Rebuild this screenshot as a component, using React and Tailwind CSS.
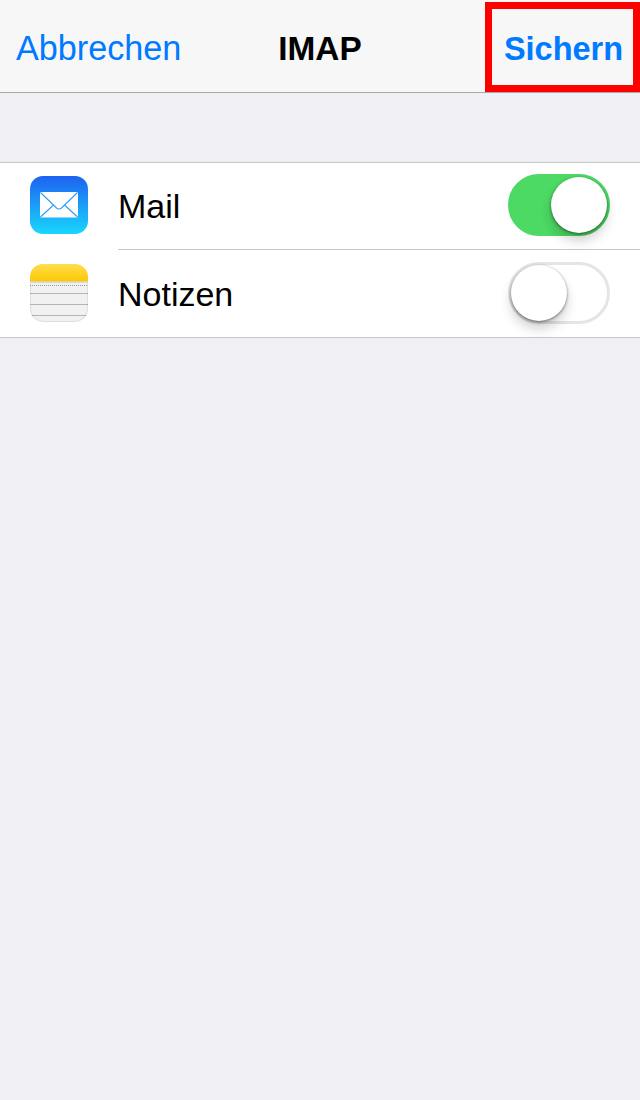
import React from 'react';

function MailIcon() {
  return (
    <svg width="58" height="58" viewBox="0 0 58 58" className="block">
      <defs>
        <linearGradient id="mailBg" x1="0" y1="0" x2="0" y2="1">
          <stop offset="0" stopColor="#1d62f0" />
          <stop offset="1" stopColor="#19d7fd" />
        </linearGradient>
      </defs>
      <rect width="58" height="58" rx="13" fill="url(#mailBg)" />
      <rect x="10" y="16" width="38" height="25.5" rx="1" fill="#fff" />
      <path d="M10.5 16.5 L26.5 32 Q29 34 31.5 32 L47.5 16.5" fill="none" stroke="#2f9bf7" strokeWidth="1.1" />
      <path d="M10.5 41 L23.5 29 M47.5 41 L34.5 29" fill="none" stroke="#2f9bf7" strokeWidth="1.1" />
    </svg>
  );
}

function NotesIcon() {
  return (
    <svg width="58" height="58" viewBox="0 0 58 58" className="block">
      <defs>
        <linearGradient id="notesTop" x1="0" y1="0" x2="0" y2="1">
          <stop offset="0" stopColor="#ffdf4f" />
          <stop offset="1" stopColor="#fec700" />
        </linearGradient>
        <clipPath id="notesClip">
          <rect width="58" height="58" rx="13" />
        </clipPath>
      </defs>
      <g clipPath="url(#notesClip)">
        <rect width="58" height="58" fill="#f1f1f1" />
        <rect width="58" height="17.5" fill="url(#notesTop)" />
        <rect y="17.5" width="58" height="1" fill="#c9c5b4" />
        <path d="M0 21.5 H58" stroke="#9a9a9a" strokeWidth="1" strokeDasharray="1 1" />
        <path d="M0 29.5 H58 M0 40.5 H58 M0 51.5 H58" stroke="#b5b5b5" strokeWidth="1" />
      </g>
      <path d="M0.5 19 V44.5 A13 13 0 0 0 13.5 57.5 H44.5 A13 13 0 0 0 57.5 44.5 V19" fill="none" stroke="#000" strokeOpacity="0.08" />
    </svg>
  );
}

function Toggle({ on }) {
  return (
    <div
      className={`flex h-[62px] w-[102px] items-center rounded-full border-[3px] ${
        on ? 'justify-end border-[#4cd964] bg-[#4cd964]' : 'justify-start border-[#e5e5e5] bg-white'
      }`}
    >
      <div className="h-[56px] w-[56px] shrink-0 rounded-full bg-white shadow-[0_8px_12px_rgba(0,0,0,0.18),0_1px_3px_rgba(0,0,0,0.5)]" />
    </div>
  );
}

function Row({ icon, label, on, last }) {
  return (
    <div className="flex">
      <div className={`flex w-[118px] shrink-0 items-center pl-[30px] ${last ? 'pb-px' : 'pb-[3px]'}`}>{icon}</div>
      <div
        className={`flex h-[87px] flex-1 items-center justify-between pr-[30px] ${
          last ? 'pb-px' : 'border-b border-[#c8c7cc] pb-[2px]'
        }`}
      >
        <span className={`text-[34px] text-black ${last ? 'pt-[3px]' : 'pt-[2px]'}`}>{label}</span>
        <Toggle on={on} />
      </div>
    </div>
  );
}

export default function App() {
  return (
    <div className="flex h-[1100px] w-[640px] flex-col bg-[#efeff4] font-['Liberation_Sans',sans-serif]">
      <div className="grid h-[93px] grid-cols-[155px_1fr_155px] border-b border-[#a9a9ab] bg-[#f7f7f8]">
        <div className="flex items-center pl-4 pt-[6px] text-[34.2px] whitespace-nowrap text-[#007aff]">Abbrechen</div>
        <div className="flex items-center justify-center pt-[6px] text-[33.4px] font-bold text-black">IMAP</div>
        <div className="mt-[2px] flex items-center justify-center border-[7px] border-[#ff0000] pt-1 pl-0.5 text-[32.5px] font-bold text-[#007aff]">
          Sichern
        </div>
      </div>
      <div className="mt-[69px] border-y border-[#c8c7cc] bg-white">
        <Row icon={<MailIcon />} label="Mail" on />
        <Row icon={<NotesIcon />} label="Notizen" last />
      </div>
    </div>
  );
}
